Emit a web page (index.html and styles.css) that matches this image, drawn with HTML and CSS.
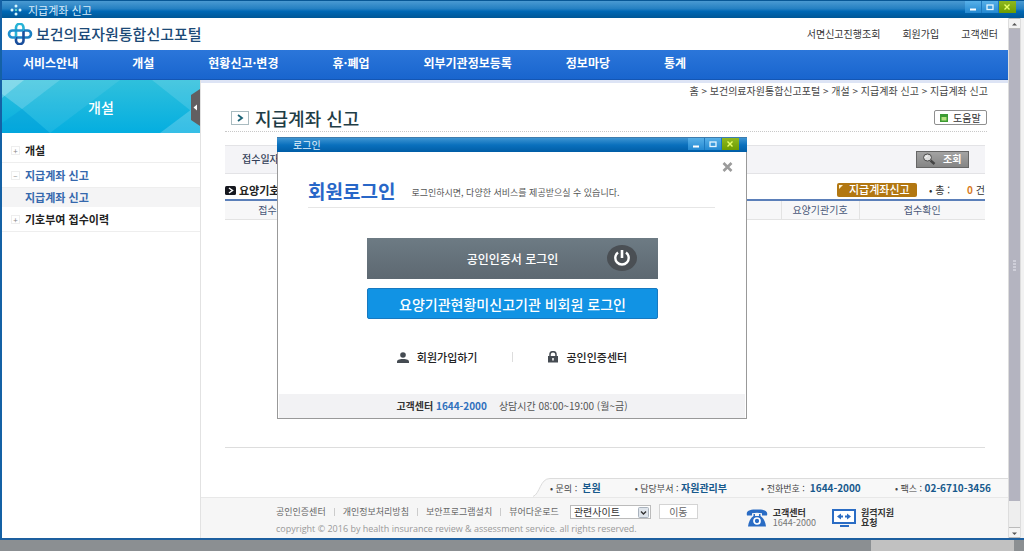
FILE: index.html
```html
<!DOCTYPE html>
<html lang="ko">
<head>
<meta charset="utf-8">
<meta name="viewport" content="width=device-width, initial-scale=1">
<title>지급계좌 신고</title>
<link rel="stylesheet" href="styles.css">
</head>
<body>
<div class="window">
  <div class="titlebar">
    <svg class="titlebar-icon" width="12" height="12" viewBox="0 0 12 12" aria-hidden="true"><g fill="#d9f6ff"><circle cx="6" cy="2" r="1.5"/><circle cx="6" cy="10" r="1.5"/><circle cx="2" cy="6" r="1.5"/><circle cx="10" cy="6" r="1.5"/><circle cx="6" cy="6" r="1.2" fill="#5fd3c0"/></g></svg>
    <span class="titlebar-text">지급계좌 신고</span>
    <div class="controls">
      <button class="control" aria-label="최소화"><svg width="16" height="12" viewBox="0 0 16 12"><path d="M5 8.500h6" stroke="#fff" stroke-width="2"/></svg></button>
      <button class="control" aria-label="최대화"><svg width="16" height="12" viewBox="0 0 16 12"><rect x="5" y="4" width="6" height="4.500" fill="none" stroke="#e6f6ff" stroke-width="1.300"/></svg></button>
      <button class="control control-close" aria-label="닫기"><svg width="16" height="12" viewBox="0 0 16 12"><path d="M5.500 3.500l5 5m0-5l-5 5" stroke="#e8ff6a" stroke-width="1.400"/></svg></button>
    </div>
  </div>

  <div class="viewport">
    <div class="page">
      <header class="header">
        <a class="brand" href="#">
          <svg width="26" height="22" viewBox="0 0 26 22" fill="none" stroke-width="2.600" aria-hidden="true">
            <path d="M9 14V4.500a3.500 3.500 0 0 1 7.500 0V8" stroke="#27b3d6"/>
            <path d="M17 7.500h3.500a3.500 3.500 0 0 1 0 7H9.500" stroke="#1b7fc2"/>
            <path d="M16.500 8v9.500a3.500 3.500 0 0 1-7.500 0V14" stroke="#1a4f9c"/>
            <path d="M9 14.500H5.500a3.500 3.500 0 0 1 0-7H16" stroke="#2090cf"/>
          </svg>
          <span>보건의료자원통합신고포털</span>
        </a>
        <div class="header-links"><a href="#">서면신고진행조회</a><a href="#">회원가입</a><a href="#">고객센터</a></div>
      </header>
      <nav class="nav"><a href="#">서비스안내</a><a href="#">개설</a><a href="#">현황신고·변경</a><a href="#">휴·폐업</a><a href="#">외부기관정보등록</a><a href="#">정보마당</a><a href="#">통계</a></nav>

      <div class="columns">
        <aside class="sidebar">
          <div class="banner">
            <svg class="banner-art" viewBox="0 0 198 53" preserveAspectRatio="none" aria-hidden="true">
              <path d="M0 0h58L20 29 0 14z" fill="#fff" opacity=".22"/><path d="M0 0h22L0 18z" fill="#fff" opacity=".25"/>
              <path d="M20 29L58 0h60L48 53z" fill="#fff" opacity=".08"/><path d="M0 43l20-14 28 24H0z" fill="#0094d8" opacity=".3"/>
              <path d="M150 0h48v38z" fill="#fff" opacity=".13"/><path d="M158 53l40-30v30z" fill="#fff" opacity=".2"/>
            </svg>
            <span class="banner-title">개설</span>
            <button class="collapse" aria-label="메뉴 접기"><svg width="9" height="37" viewBox="0 0 9 37"><path d="M9 0v37L0 31V6z" fill="#625f61"/><path d="M6 15.500v6L2.500 18.500z" fill="#fff"/></svg></button>
          </div>
          <ul class="menu">
            <li><a class="menu-item" href="#"><i class="mark">+</i>개설</a></li>
            <li><a class="menu-item current" href="#"><i class="mark">–</i>지급계좌 신고</a>
              <ul class="submenu"><li><a class="submenu-item" href="#">지급계좌 신고</a></li></ul></li>
            <li><a class="menu-item" href="#"><i class="mark">+</i>기호부여 접수이력</a></li>
          </ul>
        </aside>

        <div class="content">
          <main class="main">
            <div class="breadcrumb">홈 &gt; 보건의료자원통합신고포털 &gt; 개설 &gt; 지급계좌 신고 &gt; 지급계좌 신고</div>
            <div class="heading">
              <svg width="18" height="14" viewBox="0 0 18 14" aria-hidden="true"><rect x=".5" y=".5" width="17" height="13" fill="#fff" stroke="#a9bbc0"/><path d="M7 4l4 3-4 3" fill="none" stroke="#1c6376" stroke-width="1.800"/></svg>
              <h1>지급계좌 신고</h1>
              <button class="help"><svg width="8" height="8" viewBox="0 0 8 8" aria-hidden="true"><path d="M0 0h8v8H0z" fill="#3c9b32"/><path d="M1.500 3h5v3.500h-5z" fill="#b5e07e"/></svg>도움말</button>
            </div>
            <div class="search">
              <span>접수일자</span>
              <button class="search-button"><svg width="14" height="12" viewBox="0 0 14 12" aria-hidden="true"><path d="M8.500 7.500l4 3.500" stroke="#444" stroke-width="2.500"/><ellipse cx="5.500" cy="4.500" rx="4" ry="3.500" fill="#ddd" stroke="#4b4b4b"/><path d="M3.500 4.500a2 2 0 0 1 2-1.500" stroke="#fff" fill="none"/></svg>조회</button>
            </div>
            <div class="section">
              <h2><svg width="11" height="9" viewBox="0 0 11 9" aria-hidden="true"><rect width="11" height="9" rx="1.500" fill="#16181f"/><path d="M4 2l3.500 2.500L4 7" fill="none" stroke="#fff" stroke-width="1.500"/></svg>요양기호</h2>
              <button class="report"><svg width="4" height="4" viewBox="0 0 4 4" aria-hidden="true"><path d="M0 0h4L0 4z" fill="#fff3d0"/></svg><span>지급계좌신고</span></button>
              <div class="total"><span>• 총 :</span><span><b>0</b> 건</span></div>
            </div>
            <table class="grid">
              <thead><tr><th class="col-no">접수번호</th><th></th><th class="col-code">요양기관기호</th><th class="col-check">접수확인</th></tr></thead>
            </table>
          </main>

          <footer class="footer">
            <div class="contact-row">
              <svg class="contact-edge" width="17" height="19" viewBox="0 0 17 19" aria-hidden="true"><path d="M0 19C7 16 7 0 17 .5V19z" fill="#f8f8f8"/><path d="M0 18.500C7 16 7 .5 17 .5" fill="none" stroke="#dcdcdc"/></svg>
              <div class="contacts">
                <span>• 문의 : &nbsp;<b>본원</b></span><span>• 담당부서 : <b>자원관리부</b></span><span>• 전화번호 : &nbsp;<b>1644-2000</b></span><span>• 팩스 : <b>02-6710-3456</b></span>
              </div>
            </div>
            <div class="footer-body">
              <div class="footer-main">
                <div class="footer-links">
                  <a href="#">공인인증센터</a><i></i><a href="#">개인정보처리방침</a><i></i><a href="#">보안프로그램설치</a><i></i><a href="#">뷰어다운로드</a>
                  <span class="select-box"><select aria-label="관련사이트"><option>관련사이트</option></select><svg width="11" height="11" viewBox="0 0 11 11" aria-hidden="true"><rect x=".5" y=".5" width="10" height="10" rx="1" fill="#dfe5ec" stroke="#a9b2bd"/><path d="M3 4.500l2.500 2.500L8 4.500" fill="none" stroke="#333" stroke-width="1.400"/></svg></span>
                  <button class="go">이동</button>
                </div>
                <div class="copyright">copyright © 2016 by health insurance review &amp; assessment service. all rights reserved.</div>
              </div>
              <div class="support">
                <svg width="22" height="18" viewBox="0 0 22 18" aria-hidden="true"><path d="M1 6.500C-.5 1 5 .5 11 .5S22.500 1 21 6.500h-5V4.200C13 3.500 9 3.500 6 4.200v2.300z" fill="#2a6cc4"/><path d="M7.500 5h1.500v2h4V5h1.500v2c3 2 5 6 5.500 10.500H2C2.500 13 4.500 9 7.500 7z" fill="#2a6cc4"/><circle cx="11" cy="12" r="3" fill="#2a6cc4" stroke="#fff" stroke-width="1.700"/></svg>
                <div class="support-lines"><b>고객센터</b><span class="support-number">1644-2000</span></div>
              </div>
              <div class="support">
                <svg width="24" height="18" viewBox="0 0 24 18" aria-hidden="true"><rect x="1" y="1" width="22" height="13" fill="#fff" stroke="#2a6cc4" stroke-width="2"/><path d="M5 7.500l4-3v2h2v2H9v2zM19 7.500l-4-3v2h-2v2h2v2zM8 16h9v2H8z" fill="#2a6cc4"/></svg>
                <div class="support-lines"><b>원격지원</b><b>요청</b></div>
              </div>
            </div>
          </footer>
        </div>
      </div>
    </div>

    <div class="scrollbar" aria-hidden="true">
      <span class="scroll-arrow"><svg width="11" height="11" viewBox="0 0 11 11"><path d="M3 6.500h5L5.500 4z" fill="#555"/></svg></span>
      <span class="scroll-thumb"><svg width="5" height="11" viewBox="0 0 5 11"><path d="M1 1h3M1 4h3M1 7h3M1 10h3" stroke="#e9e9f2"/></svg></span>
      <span class="scroll-arrow"><svg width="11" height="11" viewBox="0 0 11 11"><path d="M3 4.500h5L5.500 7z" fill="#555"/></svg></span>
    </div>
  </div>
</div>
<div class="bottom-strip"><span class="bottom-thumb"></span></div>

<div class="dialog" role="dialog" aria-label="로그인">
  <div class="dialog-bar">
    <span>로그인</span>
    <div class="controls">
      <button class="control" aria-label="최소화"><svg width="16" height="12" viewBox="0 0 16 12"><path d="M5 8.500h6" stroke="#fff" stroke-width="2"/></svg></button>
      <button class="control" aria-label="최대화"><svg width="16" height="12" viewBox="0 0 16 12"><rect x="5" y="4" width="6" height="4.500" fill="none" stroke="#e6f6ff" stroke-width="1.300"/></svg></button>
      <button class="control control-close" aria-label="닫기"><svg width="16" height="12" viewBox="0 0 16 12"><path d="M5.500 3.500l5 5m0-5l-5 5" stroke="#e8ff6a" stroke-width="1.400"/></svg></button>
    </div>
  </div>
  <div class="dialog-close-row"><button class="dialog-close" aria-label="창 닫기"><svg width="11" height="10" viewBox="0 0 11 10"><path d="M1.500 1l8 8m0-8l-8 8" stroke="#9b9b9b" stroke-width="2.600"/></svg></button></div>
  <div class="dialog-head"><h2>회원로그인</h2><p>로그인하시면, 다양한 서비스를 제공받으실 수 있습니다.</p></div>
  <div class="login-buttons">
    <button class="login-cert"><span>공인인증서 로그인</span><svg width="30" height="26" viewBox="0 0 30 26" aria-hidden="true"><ellipse cx="15" cy="13" rx="15" ry="13" fill="#4a4f54"/><path d="M11 7.500a6.700 6.700 0 1 0 8 0" fill="none" stroke="#fff" stroke-width="2.400"/><path d="M15 5v8" stroke="#fff" stroke-width="2.600"/></svg></button>
    <button class="login-guest">요양기관현황미신고기관 비회원 로그인</button>
  </div>
  <div class="dialog-links">
    <a href="#"><svg width="12" height="11" viewBox="0 0 12 11" aria-hidden="true"><circle cx="6" cy="3" r="2.800" fill="#454b52"/><path d="M0 11V9.500C0 7.500 4 7 6 7s6 .5 6 2.500V11z" fill="#454b52"/></svg>회원가입하기</a>
    <i></i>
    <a href="#"><svg width="12" height="12" viewBox="0 0 12 12" aria-hidden="true"><path d="M3 6V3.500a3 2.800 0 0 1 6 0V6" fill="none" stroke="#454b52" stroke-width="1.500"/><path d="M1 5h10v6.500H1z" fill="#454b52"/><path d="M6 7v2.500" stroke="#fff" stroke-width="1.500"/></svg>공인인증센터</a>
  </div>
  <div class="dialog-foot"><b>고객센터 <em>1644-2000</em></b><span>상담시간 08:00~19:00 (월~금)</span></div>
</div>
</body>
</html>
```
FILE: styles.css
```css
* { box-sizing: border-box; }
body {
  margin: 0;
  min-height: 100vh;
  display: flex;
  flex-direction: column;
  position: relative;
  background: #fff;
  color: #333;
  font-family: "Noto Sans CJK KR", "Noto Sans", sans-serif;
  font-size: 10px;
  line-height: 14px;
}
a { color: inherit; text-decoration: none; }
button, select { font: inherit; color: inherit; margin: 0; padding: 0; border: 0; background: none; }
h1, h2, p, ul { margin: 0; padding: 0; }
ul { list-style: none; }
svg { display: block; flex: none; }
i, em { font-style: normal; }

.window { flex: 1; display: flex; flex-direction: column; border-left: 2px solid #1461a5; border-bottom: 2px solid #1d5f9f; }
.titlebar {
  height: 18px;
  display: flex;
  align-items: center;
  gap: 6px;
  padding: 0 8px;
  border-top: 1px solid #075796;
  background: linear-gradient(#4a9ad2, #2580c2 45%, #0068b5 60%, #005796);
  color: #d8ecfa;
}
.titlebar-text { flex: 1; font-size: 11px; }
.controls { display: flex; align-self: flex-start; }
.control { width: 17px; height: 12px; background: linear-gradient(#58b0e8, #2389d2); border-right: 1px solid #1e78bd; }
.control-close { background: linear-gradient(#8fb820, #6d9c00); border: 0; }

.viewport { flex: 1; display: flex; padding-right: 3px; background: #f2f2f2; }
.page { flex: 1; display: flex; flex-direction: column; background: #fff; min-width: 0; }
.header { height: 32px; display: flex; align-items: center; justify-content: space-between; padding: 0 10px 0 5px; }
.brand { display: flex; align-items: center; gap: 3px; font-size: 15px; font-weight: 500; color: #1c4a77; line-height: 20px; }
.header-links { display: flex; gap: 22px; }
.nav {
  height: 30px;
  display: flex;
  align-items: center;
  gap: 54px;
  padding: 0 21px 4px;
  background: linear-gradient(#2b76da, #1965ce);
  border-bottom: 1px solid #1456b4;
  color: #fff;
  font-size: 12px;
  font-weight: 700;
  white-space: nowrap;
}

.columns { flex: 1; display: flex; }
.sidebar { width: 199px; flex: none; border-right: 1px solid #e2e2e2; background: #fff; }
.banner { position: relative; height: 53px; display: flex; align-items: center; justify-content: center; background: linear-gradient(#2fc0dc, #04aee0); color: #fff; }
.banner-art { position: absolute; inset: 0; width: 100%; height: 100%; }
.banner-title { position: relative; font-size: 14px; font-weight: 500; }
.collapse { position: absolute; right: 0; top: 9px; }
.menu { padding-top: 5px; font-size: 11px; font-weight: 700; color: #222; }
.menu-item { height: 25px; display: flex; align-items: center; gap: 5px; padding-left: 9px; border-bottom: 1px solid #eee; }
.mark { width: 9px; height: 9px; border: 1px solid #eee; color: #888; font-size: 8px; font-weight: 400; line-height: 7px; text-align: center; }
.current, .submenu-item { color: #3568ad; }
.submenu-item { display: block; height: 19px; padding-left: 23px; line-height: 19px; background: #f4f4f5; }

.content { flex: 1; display: flex; flex-direction: column; min-width: 0; border-top: 3px solid #dde4f5; }
.main { flex: 1; padding: 1px 23px 0 24px; }
.breadcrumb { margin-right: -3px; text-align: right; white-space: nowrap; color: #444; }
.heading { display: flex; align-items: center; gap: 6px; margin: 6px -2px 0 0; height: 28px; padding-left: 6px; border-bottom: 1px dotted #c8c8c8; }
.heading h1 { flex: 1; font-size: 18px; line-height: 24px; font-weight: 500; color: #1f3d46; }
.help { width: 53px; height: 15px; display: flex; align-items: center; gap: 5px; padding-left: 5px; border: 1px solid #8f8f8f; border-radius: 2px; background: #fff; line-height: 12px; }
.search { display: flex; align-items: center; justify-content: space-between; margin-top: 13px; height: 29px; padding: 0 16px 4px 17px; border: solid #e3e3e6; border-width: 1px 0; background: #f4f4f7; font-weight: 500; color: #333f58; }
.search-button { width: 53px; height: 17px; display: flex; align-items: center; gap: 7px; padding-left: 5px; border: 1px solid #666; background: linear-gradient(#a3a3a3, #858585); color: #fff; font-weight: 700; }
.search-button, .search > span { margin-top: 3px; }
.section { display: flex; align-items: center; height: 25px; padding-top: 7px; }
.section h2 { flex: 1; display: flex; align-items: center; gap: 3px; font-size: 11px; color: #222; }
.report { width: 80px; height: 14px; display: flex; align-items: flex-start; gap: 6px; padding-left: 2px; border-radius: 2px; background: #b27711; color: #fff; font-size: 11px; line-height: 13px; font-weight: 500; white-space: nowrap; }
.report svg { margin-top: 2px; }
.total { width: 68px; display: flex; justify-content: space-between; padding-left: 12px; }
.total b { color: #d97b1c; }
.grid { width: 100%; border-collapse: collapse; table-layout: fixed; border-top: 2px solid #5b7fb9; }
.grid th { height: 19px; padding: 0; border-bottom: 1px solid #e3e3e3; background: #f7f7f8; color: #4a5878; font-weight: 400; line-height: 16px; }
.grid th + th { border-left: 1px solid #e3e3e3; }
.grid .col-no { width: 104px; }
.grid .col-code { width: 78px; }
.grid .col-check { width: 126px; }

.contact-row { display: flex; margin: 0 23px 0 24px; padding: 30px 0 0 308px; border-top: 1px solid #ddd; }
.contacts { flex: 1; display: flex; justify-content: space-between; height: 19px; align-items: center; margin-right: -23px; padding-right: 17px; background: #f8f8f8; border-top: 1px solid #dcdcdc; white-space: nowrap; color: #444; font-size: 9px; }
.contacts b { color: #17598c; font-size: 10px; }
.footer-body { display: flex; align-items: center; gap: 16px; height: 41px; padding: 0 114px 0 75px; background: #f6f6f6; border-top: 1px solid #e8e8e8; color: #666; }
.footer-main { flex: 1; font-size: 9px; white-space: nowrap; }
.footer-links { display: flex; align-items: center; gap: 8px; height: 20px; }
.footer-links i { width: 1px; height: 8px; background: #ccc; }
.select-box { position: relative; margin-left: 3px; width: 81px; height: 14px; border: 1px solid #bbb; background: #fff; }
.select-box select { display: block; width: 100%; height: 12px; padding-left: 3px; appearance: none; color: #333; font-size: 10px; line-height: 12px; }
.select-box svg { position: absolute; right: 1px; top: 1px; pointer-events: none; }
.go { width: 39px; height: 15px; border: 1px solid #d4d4d4; background: #fff; font-size: 10px; line-height: 12px; }
.copyright { font-family: "Open Sans", sans-serif; line-height: 13px; color: #999; }
.support { display: flex; align-items: center; gap: 5px; font-size: 9px; white-space: nowrap; color: #333; }
.support-lines { display: flex; flex-direction: column; line-height: 10px; }
.support-number { color: #777; font-size: 9px; }

.scrollbar { width: 13px; flex: none; display: flex; flex-direction: column; background: #eee; border: solid #ddd; border-width: 0 1px; }
.scroll-arrow { height: 11px; background: #f3f3f3; border: solid #bbb; border-width: 1px 0; }
.scroll-thumb { flex: 1; display: flex; align-items: center; justify-content: center; margin-bottom: 26px; background: #b4b4c0; }
.bottom-strip { height: 11px; display: flex; justify-content: flex-end; padding-right: 10px; background: #8b8f92; }
.bottom-thumb { width: 143px; background: #c1c1c1; }

.dialog { position: absolute; top: 137px; left: 0; right: 0; width: 470px; margin: 0 auto; background: #fff; border: 1px solid #999; }
.dialog-bar { display: flex; align-items: center; justify-content: space-between; height: 15px; padding: 0 8px 0 16px; margin: -1px -1px 0; border-top: 1px solid #3c7cae; background: linear-gradient(#3d94d2, #0a70bd 50%, #005da6); color: #e4f2fc; }
.dialog-close-row { display: flex; justify-content: flex-end; padding: 10px 13px 0; }
.dialog-head { display: flex; align-items: center; gap: 16px; height: 36px; margin: 0 31px 0 30px; padding-top: 2px; border-bottom: 1px solid #e6e6e6; white-space: nowrap; }
.dialog-head h2 { font-size: 19px; line-height: 24px; color: #2867c8; }
.dialog-head p { padding-top: 4px; font-size: 9px; color: #555; }
.login-buttons { display: flex; flex-direction: column; gap: 9px; padding: 30px 88px 0 89px; color: #fff; font-weight: 500; }
.login-cert { position: relative; height: 41px; display: flex; align-items: center; justify-content: center; background: linear-gradient(#6d7b84, #5d6871); font-size: 12px; }
.login-cert svg { position: absolute; right: 21px; top: 7px; }
.login-guest { height: 31px; border: 1px solid #1779c0; border-radius: 2px; background: #1193e4; font-size: 14px; }
.dialog-links { display: flex; align-items: center; justify-content: center; gap: 34px; padding-top: 31px; font-size: 11px; font-weight: 500; color: #222; }
.dialog-links a { display: flex; align-items: center; gap: 8px; }
.dialog-links i { width: 1px; height: 10px; background: #ddd; }
.dialog-foot { display: flex; align-items: center; justify-content: center; gap: 12px; height: 24px; margin: 30px 1px 0; background: #f2f2f4; color: #555; }
.dialog-foot b { color: #333; }
.dialog-foot em { color: #2f70bd; }
```
